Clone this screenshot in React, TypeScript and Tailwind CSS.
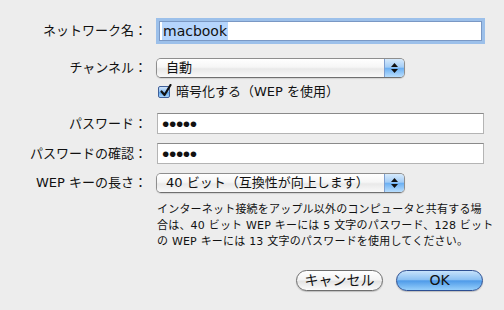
import React from 'react';

const FONT = 'font-[family-name:DejaVu_Sans,Noto_Sans_CJK_JP,sans-serif]';

function Label({ children }: { children: React.ReactNode }) {
  return (
    <div className="w-[147px] shrink-0 text-right text-[13px] leading-[20px] text-[#111]">
      {children}
    </div>
  );
}

function PopUp({ value }: { value: string }) {
  return (
    <div className="ml-[9px] flex h-[20px] w-[249px] overflow-hidden rounded-[5px] border border-[#8e8e8e] border-b-[#6f6f6f] shadow-[0_1px_1px_rgba(0,0,0,0.12)]">
      <div className="flex flex-1 items-center bg-[linear-gradient(#ffffff_0%,#f6f6f6_45%,#e9e9e9_55%,#f9f9f9_100%)] pl-[9px] text-[13px] text-[#111]">
        {value}
      </div>
      <div className="flex w-[20px] flex-col items-center justify-center gap-[2px] border-l border-[#7f9fcf] bg-[linear-gradient(#d6eafc_0%,#a4cdf6_45%,#6cb0f3_52%,#b9defd_100%)]">
        <svg width="7" height="4" viewBox="0 0 7 4">
          <path d="M3.5 0 L7 4 L0 4 Z" fill="#111" />
        </svg>
        <svg width="7" height="4" viewBox="0 0 7 4">
          <path d="M0 0 L7 0 L3.5 4 Z" fill="#111" />
        </svg>
      </div>
    </div>
  );
}

function TextField({ children, focused }: { children: React.ReactNode; focused?: boolean }) {
  return (
    <div
      className={
        focused
          ? 'ml-[12px] flex h-[20px] w-[323px] items-center border border-[#7a98c4] bg-white pl-[2px] shadow-[0_0_0_3px_#9cc0ea]'
          : 'ml-[10px] flex h-[21px] w-[327px] items-center border border-[#b4b4b4] border-t-[#8a8a8a] bg-white pl-[4px]'
      }
    >
      {children}
    </div>
  );
}

function Dots() {
  return (
    <span className="font-[family-name:Liberation_Sans,sans-serif] text-[21px] leading-[20px] tracking-[-0.4px] text-[#111]">
      •••••
    </span>
  );
}

export default function App() {
  return (
    <div className={`${FONT} flex h-[310px] w-[504px] flex-col bg-[#ededed] pt-[21px] antialiased`}>
      {/* network name */}
      <div className="flex items-center">
        <Label>ネットワーク名：</Label>
        <TextField focused>
          <span className="bg-[#b5d5fd] px-[1px] text-[14px] leading-[18px] text-[#111]">macbook</span>
        </TextField>
      </div>

      {/* channel */}
      <div className="mt-[17px] flex items-center">
        <Label>チャンネル：</Label>
        <PopUp value="自動" />
      </div>

      {/* encrypt */}
      <div className="mt-[6px] flex h-[16px] items-center pl-[158px]">
        <div className="relative h-[12px] w-[12px] rounded-[2px] border border-[#3f5f99] bg-[linear-gradient(#cfe4fb_0%,#8dbff2_50%,#5fa6ec_55%,#a9d5fb_100%)]">
          <svg className="absolute left-[1px] top-[-3px]" width="12" height="13" viewBox="0 0 12 13">
            <path d="M1.5 7.5 L4.5 11 L10.5 1" fill="none" stroke="#111" strokeWidth="2.2" strokeLinecap="round" strokeLinejoin="round" />
          </svg>
        </div>
        <span className="ml-[6px] text-[13px] leading-[16px] text-[#111]">暗号化する（WEP を使用）</span>
      </div>

      {/* password */}
      <div className="mt-[13px] flex items-center">
        <Label>パスワード：</Label>
        <TextField>
          <Dots />
        </TextField>
      </div>

      <div className="mt-[9px] flex items-center">
        <Label>パスワードの確認：</Label>
        <TextField>
          <Dots />
        </TextField>
      </div>

      {/* key length */}
      <div className="mt-[9px] flex items-center">
        <Label>WEP キーの長さ：</Label>
        <PopUp value="40 ビット（互換性が向上します）" />
      </div>

      {/* help */}
      <div className="mt-[9px] pl-[157px] text-[11px] leading-[16px] tracking-[0.2px] whitespace-nowrap text-[#111]">
        インターネット接続をアップル以外のコンピュータと共有する場
        <br />
        合は、40 ビット WEP キーには 5 文字のパスワード、128 ビット
        <br />
        の WEP キーには 13 文字のパスワードを使用してください。
      </div>

      {/* buttons */}
      <div className="mt-[20px] flex justify-end gap-[13px] pr-[21px]">
        <button className="h-[21px] w-[87px] rounded-full border border-[#6e6e6e] bg-[linear-gradient(#ffffff_0%,#f4f4f4_45%,#e4e4e4_55%,#fbfbfb_100%)] text-[14px] leading-[19px] text-[#111] shadow-[0_1px_1px_rgba(0,0,0,0.2)]">
          キャンセル
        </button>
        <button className="h-[21px] w-[87px] rounded-full border border-[#2d4f92] bg-[linear-gradient(#c6e2fb_0%,#8cc1f3_45%,#4f9be9_52%,#96cffb_100%)] text-[14px] leading-[19px] text-[#111] shadow-[0_1px_1px_rgba(0,0,0,0.2)]">
          OK
        </button>
      </div>
    </div>
  );
}
